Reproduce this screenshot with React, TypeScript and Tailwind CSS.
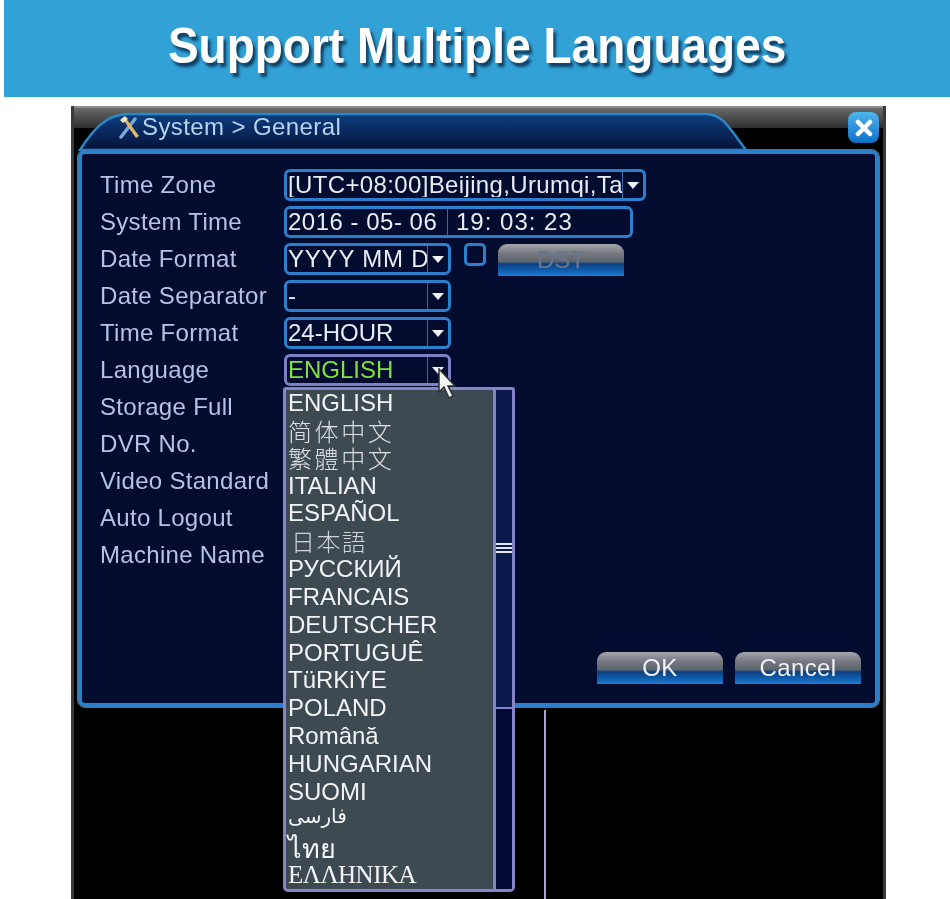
import type { ReactNode } from 'react'

const labels = ['Time Zone', 'System Time', 'Date Format', 'Date Separator', 'Time Format', 'Language', 'Storage Full', 'DVR No.', 'Video Standard', 'Auto Logout', 'Machine Name']

function Arrow() {
  return (
    <div className="w-[21px] h-full flex items-center justify-center border-l border-[#2a6fb5]">
      <svg width="12" height="7" viewBox="0 0 12 7"><path d="M0 0h12L6 7z" fill="#eef2fa" /></svg>
    </div>
  )
}

function Select({ text, width, lavender, green, spacing }: { text: string; width: string; lavender?: boolean; green?: boolean; spacing?: string }) {
  return (
    <div className={`${width} h-[32px] flex items-center rounded-[6px] border-[3px] ${lavender ? 'border-[#7f7fc4]' : 'border-[#2a80cc]'} bg-[#030b2e]`}>
      <div className={`flex-1 min-w-0 pl-[1px] overflow-hidden whitespace-nowrap ${green ? 'text-[#7fe23e]' : 'text-[#e8ecf4]'} ${spacing ?? ''}`}>{text}</div>
      <Arrow />
    </div>
  )
}

function GlossButton({ children, dim }: { children: ReactNode; dim?: boolean }) {
  return (
    <div className={`w-[126px] h-[32px] rounded-t-[9px] flex items-center justify-center bg-[linear-gradient(180deg,#a3a7ad_0%,#74797f_30%,#5e646c_55%,#0d3f7e_62%,#0f5aa8_80%,#1c7cd0_100%)] ${dim ? 'text-[#66768c]' : 'text-[#f0f3f8] tracking-[0.4px]'}`}>
      {children}
    </div>
  )
}

function Row({ label, children }: { label: string; children?: ReactNode }) {
  return (
    <div className="h-[32px] flex items-center">
      <div className="w-[183px] -ml-[1px] mr-[1px] pb-[1px] text-[#b6c2e8] tracking-[0.3px] whitespace-nowrap">{label}</div>
      {children}
    </div>
  )
}

function LanguageList() {
  const items: { t: string; c?: string }[] = [
    { t: 'ENGLISH' },
    { t: '简体中文', c: 'h-[27.5px] text-[#dde0e3] font-["Noto_Sans_CJK_SC",sans-serif] font-light tracking-[2.6px]' },
    { t: '繁體中文', c: 'h-[27.5px] text-[#dde0e3] font-["Noto_Sans_CJK_TC",sans-serif] font-light tracking-[2.6px]' },
    { t: 'ITALIAN' },
    { t: 'ESPAÑOL' },
    { t: '日本語', c: 'h-[28px] text-[#d0d4d8] font-["Noto_Sans_CJK_JP",sans-serif] font-light pl-[3px] tracking-[1.4px]' },
    { t: 'РУССКИЙ' },
    { t: 'FRANCAIS' },
    { t: 'DEUTSCHER' },
    { t: 'PORTUGUÊ' },
    { t: 'TüRKiYE' },
    { t: 'POLAND' },
    { t: 'Română' },
    { t: 'HUNGARIAN' },
    { t: 'SUOMI' },
    { t: 'فارسی', c: 'h-[21px] !text-[20px] font-["DejaVu_Sans",sans-serif]' },
    { t: 'ไทย', c: 'h-[36px] pt-[6px] !text-[27px] font-["Noto_Sans",sans-serif]' },
    { t: 'ΕΛΛΗΝΙΚΑ', c: 'h-[24px] !text-[25px] font-["Liberation_Serif",serif] -tracking-[0.5px]' },
  ]
  return (
    <div className="absolute left-[-1px] top-[33px] w-[232px] h-[505px] z-10 flex rounded-b-[5px] rounded-t-[3px] border-[3px] border-[#8683c6] bg-[#3d4a52]">
      <div className="flex-1 pl-[2px] -mt-[1px] text-[#f2f4f5]">
        {items.map((it) => (
          <div key={it.t} className={`flex items-center whitespace-nowrap ${it.c ?? 'h-[27.8px]'}`}>
            {it.t}
          </div>
        ))}
      </div>
      <div className="w-[19px] border-l-[3px] border-[#8683c6] bg-[#050a35]">
        <div className="h-[319px] border-b-[2px] border-[#8683c6] bg-[#0a1a4e] flex flex-col justify-end">
          <div className="flex flex-col gap-[2px] pb-[154px]">
            <div className="h-[2px] bg-[#e6e8f0]" />
            <div className="h-[2px] bg-[#e6e8f0]" />
            <div className="h-[2px] bg-[#e6e8f0]" />
          </div>
        </div>
      </div>
    </div>
  )
}

export default function App() {
  return (
    <div className="w-[950px] h-[899px] overflow-hidden bg-white font-['Liberation_Sans',Arial,sans-serif] text-[24px] leading-none">
      {/* Banner */}
      <div className="ml-[4px] h-[97px] bg-[#31a1d6] flex items-center justify-center pb-[5px]">
        <h1 className="text-[50px] font-bold text-white whitespace-nowrap scale-x-[0.92] [text-shadow:3px_4px_3px_#0f3f63]">Support Multiple Languages</h1>
      </div>

      {/* DVR window */}
      <div className="relative ml-[71px] mt-[9px] w-[815px] h-[793px] bg-black border-x-[3px] border-[#3a3a3a] blur-[0.4px]">
        <div className="h-[22px] border-t-[2px] border-[#8d8d8d] bg-gradient-to-b from-[#6a6a6a] to-[#2f2f2f]" />
        <div className="h-[22px] bg-black" />

        <svg className="absolute left-[4px] top-[5px]" width="680" height="40" viewBox="0 0 680 40">
          <defs>
            <linearGradient id="tab" x1="0" y1="0" x2="0" y2="1">
              <stop offset="0" stopColor="#0e3f82" />
              <stop offset="1" stopColor="#061238" />
            </linearGradient>
          </defs>
          <path d="M2 39C14 20 28 3 50 3H628C645 3 652 18 668 39Z" fill="url(#tab)" stroke="#2a88c8" strokeWidth="2.5" />
        </svg>
        <div className="absolute left-[43px] top-[7px] flex items-center h-[28px] text-[#b6d4f0] tracking-[0.4px]">
          <svg width="24" height="24" viewBox="0 0 24 24" className="mr-[1px]">
            <path d="M4 22L18 4" stroke="#7aa6d8" strokeWidth="3.5" strokeLinecap="round" />
            <path d="M5 3l3-1 14 19-3 2z" fill="#e0b96a" />
            <path d="M3 5l5-4 3 3-5 4z" fill="#f4e6c0" />
          </svg>
          System &gt; General
        </div>
        <div className="absolute right-[4px] top-[6px] w-[31px] h-[31px] rounded-[8px] bg-gradient-to-b from-[#4fb6ec] to-[#0b6fc6] flex items-center justify-center">
          <svg width="18" height="18" viewBox="0 0 18 18"><path d="M3 3l12 12M15 3L3 15" stroke="#fff" strokeWidth="4.5" strokeLinecap="round" /></svg>
        </div>

        {/* General panel */}
        <div className="relative mx-[4px] h-[557px] flex flex-col rounded-[7px] border-[4px] border-[#2a80cc] outline outline-1 outline-[#6b6b60] bg-[#030b2e] pl-[19px] pr-[14px] pt-[15px] pb-[19px]">
          <div className="flex flex-col gap-[5px]">
            <Row label={labels[0]}>
              <Select text="[UTC+08:00]Beijing,Urumqi,Tai" width="w-[362px]" spacing="tracking-[0.36px]" />
            </Row>
            <Row label={labels[1]}>
              <div className="w-[349px] h-[32px] flex items-center rounded-[6px] border-[3px] border-[#2a80cc] text-[#e8ecf4]">
                <div className="w-[161px] h-full flex items-center pl-[1px] border-r border-[#2a6fb5] whitespace-pre tracking-[0.5px]">2016 - 05- 06</div>
                <div className="pl-[8px] whitespace-pre tracking-[1px]">19: 03: 23</div>
              </div>
            </Row>
            <Row label={labels[2]}>
              <Select text="YYYY MM DD" width="w-[167px]" spacing="tracking-[0.8px]" />
              <div className="ml-[13px] mb-[9px] w-[22px] h-[23px] rounded-[5px] border-[3px] border-[#2a80cc]" />
              <div className="ml-[12px] mt-[2px]"><GlossButton dim>DST</GlossButton></div>
            </Row>
            <Row label={labels[3]}>
              <Select text="-" width="w-[167px]" />
            </Row>
            <Row label={labels[4]}>
              <Select text="24-HOUR" width="w-[167px]" />
            </Row>
            <Row label={labels[5]}>
              <div className="relative">
                <Select text="ENGLISH" width="w-[167px]" lavender green />
                <LanguageList />
                <svg className="absolute left-[153px] top-[14px] z-20" width="20" height="32" viewBox="0 0 20 32">
                  <path d="M2 1v23l5-5 5 11 4-2-5-10h7z" fill="#f4f6f2" stroke="#2b3138" strokeWidth="1.5" />
                </svg>
              </div>
            </Row>
            {labels.slice(6).map((l) => (
              <Row key={l} label={l} />
            ))}
          </div>
          <div className="mt-auto flex justify-end gap-[12px]">
            <GlossButton>OK</GlossButton>
            <GlossButton>Cancel</GlossButton>
          </div>
        </div>

        {/* Below the panel */}
        <div className="ml-[470px] mt-[3px] w-[2px] h-[200px] bg-[#a9a6cc]" />
      </div>
    </div>
  )
}
